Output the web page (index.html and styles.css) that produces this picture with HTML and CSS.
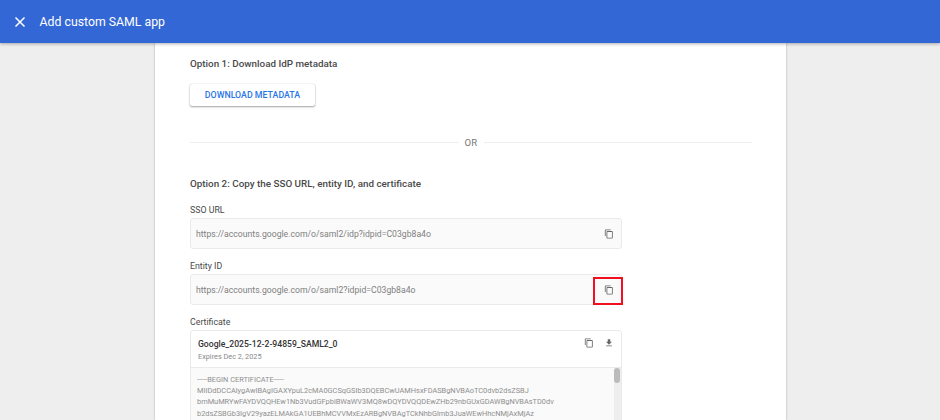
FILE: index.html
```html
<!DOCTYPE html>
<html lang="en">
<head>
<meta charset="utf-8">
<title>Add custom SAML app</title>
<link rel="stylesheet" href="styles.css">
</head>
<body>
<svg class="defs" width="0" height="0" aria-hidden="true">
  <symbol id="copy" viewBox="0 0 24 24"><path d="M16 1H4c-1.100 0-2 .9-2 2v14h2V3h12V1zm3 4H8c-1.100 0-2 .9-2 2v14c0 1.100.9 2 2 2h11c1.100 0 2-.9 2-2V7c0-1.100-.9-2-2-2zm0 16H8V7h11v14z"/></symbol>
</svg>
<header class="topbar">
  <svg class="close" viewBox="0 0 12 12"><path d="M1.500 1.500l9 9M10.500 1.500l-9 9"/></svg>
  <h1 class="title">Add custom SAML app</h1>
</header>
<main class="card">
  <h2 class="heading first">Option 1: Download IdP metadata</h2>
  <button class="btn">DOWNLOAD METADATA</button>
  <div class="divider"><span class="rule"></span><span class="or">OR</span><span class="rule"></span></div>
  <h2 class="heading second">Option 2: Copy the SSO URL, entity ID, and certificate</h2>
  <div class="column">
    <label class="label">SSO URL</label>
    <div class="field">
      <span class="value">https://accounts.google.com/o/saml2/idp?idpid=C03gb8a4o</span>
      <svg class="icon"><use href="#copy"/></svg>
    </div>
    <label class="label">Entity ID</label>
    <div class="field">
      <span class="value">https://accounts.google.com/o/saml2?idpid=C03gb8a4o</span>
      <svg class="icon"><use href="#copy"/></svg>
      <span class="highlight"></span>
    </div>
    <label class="label">Certificate</label>
    <div class="cert">
      <div class="cert-head">
        <div class="cert-info">
          <div class="cert-name">Google_2025-12-2-94859_SAML2_0</div>
          <div class="cert-exp">Expires Dec 2, 2025</div>
        </div>
        <svg class="icon"><use href="#copy"/></svg>
        <svg class="icon" viewBox="0 0 24 24"><path d="M19 9h-4V3H9v6H5l7 7 7-7zM5 18v2h14v-2H5z"/></svg>
      </div>
      <div class="cert-body">
        <pre class="cert-text">-----BEGIN CERTIFICATE-----
MIIDdDCCAlygAwIBAgIGAXYpuL2cMA0GCSqGSIb3DQEBCwUAMHsxFDASBgNVBAoTC0dvb2dsZSBJ
bmMuMRYwFAYDVQQHEw1Nb3VudGFpbiBWaWV3MQ8wDQYDVQQDEwZHb29nbGUxGDAWBgNVBAsTD0dv
b2dsZSBGb3IgV29yazELMAkGA1UEBhMCVVMxEzARBgNVBAgTCkNhbGlmb3JuaWEwHhcNMjAxMjAz</pre>
        <div class="scroll"><span class="thumb"></span></div>
      </div>
    </div>
  </div>
</main>
</body>
</html>
```
FILE: styles.css
```css
* { box-sizing: border-box; }
html, body { margin: 0; height: 420px; overflow: hidden; }
body { background: #eeeeee; font-family: Roboto, "Liberation Sans", sans-serif; color: #444; }
.defs { position: absolute; }
.topbar {
  height: 43px; background: #3367d6; display: flex; align-items: center;
  padding-left: 14px; box-shadow: 0 1px 3px rgba(0,0,0,.3); position: relative; z-index: 2;
}
.close { width: 12px; height: 12px; fill: none; stroke: #fff; stroke-width: 1.500; margin-right: 13.500px; }
.title { margin: 0; font-size: 12.300px; font-weight: 400; color: #fff; }
.card {
  width: 631px; height: 377px; margin-left: 155px; background: #fff;
  padding: 0 35px; box-shadow: 0 0 2px rgba(0,0,0,.3); overflow: hidden;
}
.heading { margin: 0; font-size: 9.850px; line-height: 14px; font-weight: 500; color: #4a4a4a; }
.first { padding-top: 14px; }
.btn {
  display: block; margin-top: 13px; width: 125px; height: 22px; padding: 0; border: 0;
  background: #fff; border-radius: 2px; color: #2a75e8; font: 500 8.800px Roboto, sans-serif;
  box-shadow: 0 1px 2px rgba(0,0,0,.35), 0 0 1px rgba(0,0,0,.25);
}
.divider { display: flex; align-items: center; gap: 6px; margin-top: 29px; height: 14px; width: 562px; }
.rule { flex: 1; height: 1px; background: #eeeeee; }
.or { font-size: 9.500px; color: #777; letter-spacing: .3px; }
.second { margin-top: 27.500px; }
.column { width: 432px; position: relative; }
.label { display: block; font-size: 8.800px; line-height: 12px; color: #4a4a4a; }
.heading + .column > .label:first-child { margin-top: 13.500px; }
.field {
  display: flex; align-items: center; justify-content: space-between; position: relative;
  height: 31px; margin: 2px 0 11px; padding: 0 7px 0 5px; background: #fafafa;
  border: 1px solid #eaeaea; border-radius: 3px;
}
.value { font-size: 8.670px; color: #808080; }
.icon { width: 10px; height: 10px; fill: #666; }
.highlight { position: absolute; right: -2px; top: 2px; width: 30px; height: 28px; border: 2px solid #f0101f; }
.cert { margin-top: 2px; border: 1px solid #eaeaea; border-radius: 3px 3px 0 0; background: #fff; }
.cert-head { display: flex; align-items: flex-start; gap: 10px; height: 37px; padding: 7px 7px 0; border-bottom: 1px solid #eaeaea; }
.cert-info { flex: 1; }
.cert-name { font-size: 8.650px; line-height: 12px; font-weight: 500; color: #333; }
.cert-exp { font-size: 7.300px; line-height: 13px; color: #888; }
.cert-body { position: relative; background: #fafafa; height: 53px; padding: 6px 0 0 6px; }
.cert-text { margin: 0; font: 7.400px/11.200px Roboto, sans-serif; color: #8f8f8f; }
.scroll { position: absolute; right: 0; top: 0; bottom: 0; width: 7px; background: #eeeeee; }
.thumb { display: block; width: 6px; height: 15px; background: #bbbbbb; border-radius: 3px; }
```
